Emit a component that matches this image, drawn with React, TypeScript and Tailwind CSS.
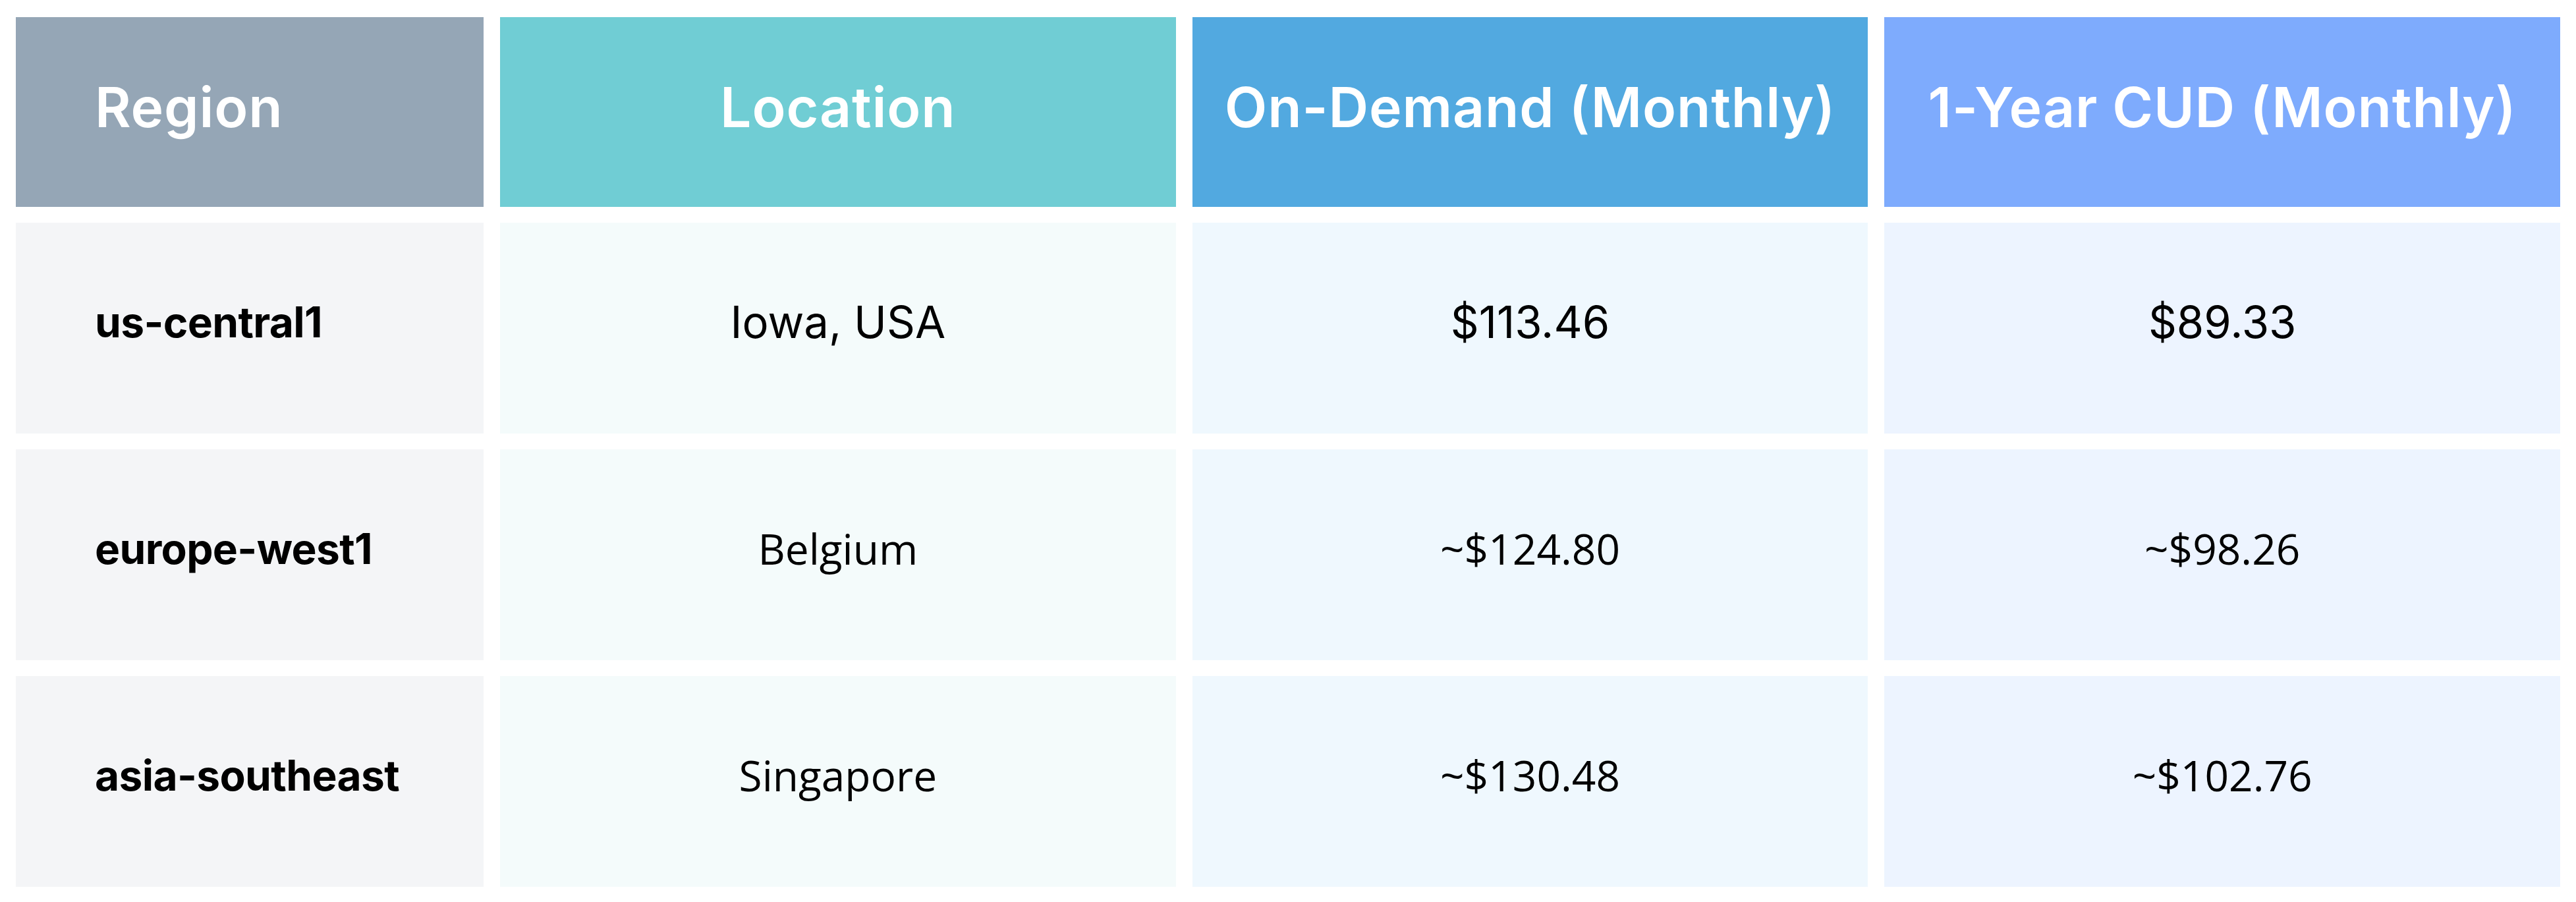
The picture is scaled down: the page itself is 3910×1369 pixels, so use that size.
const headers = [
  { label: 'Region', bg: 'bg-[#95a6b6]', align: 'justify-start pl-[120px]' },
  { label: 'Location', bg: 'bg-[#70cdd4]', align: 'justify-center' },
  { label: 'On-Demand (Monthly)', bg: 'bg-[#52a9e0]', align: 'justify-center' },
  { label: '1-Year CUD (Monthly)', bg: 'bg-[#7eabfd]', align: 'justify-center' },
];

const cellBg = ['bg-[#f4f5f7]', 'bg-[#f4fbfb]', 'bg-[#eff8fe]', 'bg-[#edf4ff]'];

// first row was typed in a different face than the two estimated rows
const rows = [
  { region: 'us-central1', location: 'Iowa, USA', onDemand: '$113.46', cud: '$89.33', approx: false },
  { region: 'europe-west1', location: 'Belgium', onDemand: '~$124.80', cud: '~$98.26', approx: true },
  { region: 'asia-southeast', location: 'Singapore', onDemand: '~$130.48', cud: '~$102.76', approx: true },
];

export default function App() {
  return (
    <div className="w-[3910px] h-[1369px] bg-white px-[24px] pt-[26px] pb-[23px] font-['Inter',sans-serif]">
      <div className="grid grid-cols-[710px_1fr_1fr_1fr] grid-rows-[288px_320px_320px_320px] gap-x-[25px] gap-y-[24px]">
        {headers.map(h => (
          <div key={h.label} className={`${h.bg} ${h.align} flex items-center pb-[14px] text-white text-[84px] font-semibold tracking-[0.01em]`}>
            {h.label}
          </div>
        ))}

        {rows.map(r => {
          const valueFont = r.approx
            ? "font-['Open_Sans',sans-serif] text-[64px] font-normal"
            : "font-['Inter',sans-serif] text-[67px] font-normal";
          return [
            <div key={r.region + '-r'} className={`${cellBg[0]} flex items-center pl-[120px] pb-[18px] text-[64px] font-bold text-black tracking-[-0.01em]`}>
              {r.region}
            </div>,
            <div key={r.region + '-l'} className={`${cellBg[1]} flex items-center justify-center pb-[18px] text-black ${valueFont}`}>
              {r.location}
            </div>,
            <div key={r.region + '-o'} className={`${cellBg[2]} flex items-center justify-center pb-[18px] text-black ${valueFont}`}>
              {r.onDemand}
            </div>,
            <div key={r.region + '-c'} className={`${cellBg[3]} flex items-center justify-center pb-[18px] text-black ${valueFont}`}>
              {r.cud}
            </div>,
          ];
        })}
      </div>
    </div>
  );
}
